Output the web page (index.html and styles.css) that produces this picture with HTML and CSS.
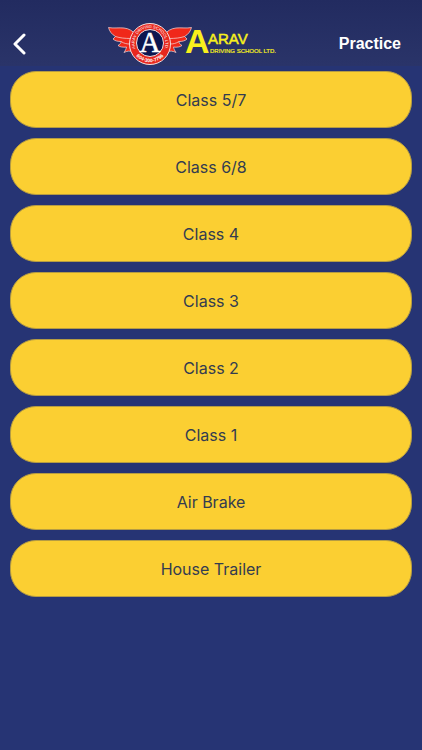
FILE: index.html
```html
<!DOCTYPE html>
<html lang="en">
<head>
  <meta charset="UTF-8" />
  <meta name="viewport" content="width=device-width, initial-scale=1.0"/>
  <title>Aarav Driving School | Practice</title>
  <link rel="stylesheet" href="styles.css">
</head>
<body>
  <header class="topbar">
    <button class="back" type="button" aria-label="Back">
      <svg width="14" height="24" viewBox="0 0 14 24">
        <path d="M12 3 L3 12 L12 21" />
      </svg>
    </button>

    <svg class="logo" width="197" height="44" viewBox="0 0 197 44" role="img" aria-label="Aarav Driving School Ltd.">
      <defs>
        <path id="arcTop" d="M28 28 A15.5 15.5 0 1 1 56 28" />
        <path id="arcBottom" d="M25 29 A18.5 18.5 0 0 0 59 29" />
        <g id="wing">
          <path d="M0.5 5.5 C5 6.5 11 5.5 16 6 C21 6.5 25 9 28 13 L26 30 C22 28.5 19 29 16 30.5 C17.5 28.5 18 27 18.5 25 C15 25.5 12 25 10 23.5 C12 22.5 13 21 13 19.5 C10 19.5 7 19 5 17 L7.5 14.5 C4 12.5 1.5 9.5 0.5 5.5 Z" />
          <path class="feather" d="M7.5 14.5 C12 16 17 16.5 23 16.5 M13 19.5 C16 21.5 19 22 22 22" />
        </g>
      </defs>
      <!-- wings -->
      <g class="wings">
        <use href="#wing" />
        <use href="#wing" transform="translate(84 0) scale(-1 1)" />
      </g>
      <!-- round badge -->
      <circle class="ring" cx="42" cy="22" r="20.5" />
      <circle class="disc" cx="42" cy="21" r="13.5" />
      <text class="ring-text"><textPath href="#arcTop" startOffset="50%">AARAV DRIVING SCHOOL LTD.</textPath></text>
      <text class="ring-phone"><textPath href="#arcBottom" startOffset="50%">604-300-7796</textPath></text>
      <text class="monogram" x="42" y="30">A</text>
      <!-- name -->
      <text class="name-initial" x="77" y="31">A</text>
      <text class="name-rest" x="100" y="22">ARAV</text>
      <text class="name-sub" x="102" y="31">DRIVING SCHOOL LTD.</text>
    </svg>

    <h1 class="title">Practice</h1>
  </header>

  <main class="classes">
    <button class="class-btn" type="button">Class 5/7</button>
    <button class="class-btn" type="button">Class 6/8</button>
    <button class="class-btn" type="button">Class 4</button>
    <button class="class-btn" type="button">Class 3</button>
    <button class="class-btn" type="button">Class 2</button>
    <button class="class-btn" type="button">Class 1</button>
    <button class="class-btn" type="button">Air Brake</button>
    <button class="class-btn" type="button">House Trailer</button>
  </main>
</body>
</html>
```

FILE: styles.css
```css
body {
  margin: 0;
  min-height: 100vh;
  font-family: Inter, "Liberation Sans", sans-serif;
  background: #263474;
}
.topbar {
  display: grid;
  grid-template-columns: 1fr auto 1fr;
  align-items: center;
  padding: 21px 21px 0 12px;
  height: 45px;
  background: linear-gradient(#222b60, #2a3469);
}
.back {
  justify-self: start;
  display: flex;
  padding: 0;
  background: none;
  border: none;
  cursor: pointer;
}
.back path {
  fill: none;
  stroke: #fff;
  stroke-width: 3;
  stroke-linecap: round;
  stroke-linejoin: round;
}
.title {
  justify-self: end;
  margin: 0;
  font-family: "Liberation Sans", Arial, sans-serif;
  font-size: 16px;
  font-weight: bold;
  color: #fff;
}
.wings {
  fill: #f0281a;
  stroke: #f3dede;
  stroke-width: 0.7;
  stroke-linejoin: round;
}
.feather {
  fill: none;
}
.ring {
  fill: #e8281e;
  stroke: #f3dede;
  stroke-width: 1;
}
.disc {
  fill: #0d1650;
  stroke: #f3dede;
  stroke-width: 1;
}
.ring-text, .ring-phone {
  font-family: "Liberation Sans", Arial, sans-serif;
  text-anchor: middle;
  fill: #fff;
}
.ring-text {
  font-size: 4px;
}
.ring-phone {
  font-size: 5px;
  font-weight: bold;
}
.monogram {
  font-family: "Liberation Serif", "Times New Roman", serif;
  font-size: 29px;
  text-anchor: middle;
  fill: #fff;
  stroke: #fff;
  stroke-width: 0.5;
}
.name-initial, .name-rest, .name-sub {
  font-family: "Liberation Sans", Arial, sans-serif;
  fill: #f8f01c;
}
.name-initial {
  font-size: 34px;
  font-weight: bold;
}
.name-rest {
  font-size: 15px;
  stroke: #f8f01c;
  stroke-width: 0.5;
}
.name-sub {
  font-size: 6px;
  stroke: #f8f01c;
  stroke-width: 0.2;
}
.classes {
  display: flex;
  flex-direction: column;
  gap: 10px;
  padding: 5px 10px;
}
.class-btn {
  height: 57px;
  border: 1px solid #b59c43;
  border-radius: 26px;
  background: #fbcf32;
  color: #333c50;
  font-family: inherit;
  font-size: 16px;
  cursor: pointer;
}
```
